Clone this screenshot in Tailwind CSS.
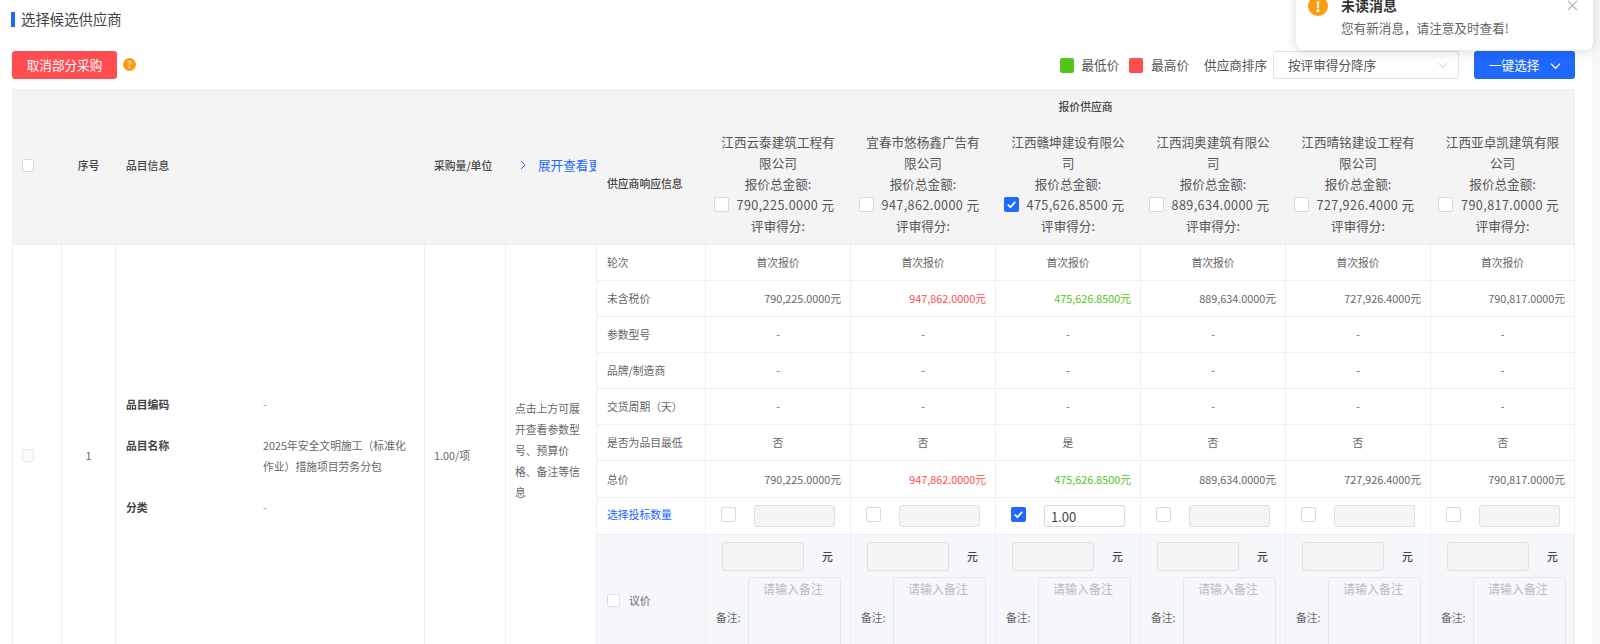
<!DOCTYPE html>
<html lang="zh-CN">
<head>
    <meta charset="UTF-8">
    <title>选择候选供应商</title>
    <script src="https://cdn.jsdelivr.net/npm/@tailwindcss/browser@4"></script>
</head>
<body class="relative h-[644px] w-[1600px] overflow-hidden bg-white font-['Noto_Sans_CJK_SC',sans-serif] text-[10.8px] text-[#666]">
    <!-- Scrollbar track -->
    <div class="absolute bottom-0 right-0 top-0 w-[8px] bg-[#f8f8f8]"></div>

    <!-- Notification -->
    <div class="absolute left-[1296px] top-[-40px] z-10 h-[90px] w-[297px] rounded-lg bg-white shadow-[0_2px_12px_rgba(0,0,0,0.15)]">
        <div class="absolute left-[12px] top-[36px] flex h-[20px] w-[20px] items-center justify-center rounded-full bg-[#fa9d14] text-[14px] font-bold leading-none text-white">!</div>
        <div class="absolute left-[45px] top-[34px] text-[14px] font-bold leading-[22px] text-[#333]">未读消息</div>
        <div class="absolute left-[45px] top-[59px] text-[12.6px] leading-[18px] text-[#666]">您有新消息&#xFF0C;请注意及时查看!</div>
        <svg class="absolute right-[15px] top-[40px] h-[11px] w-[11px] text-[#aaa]" viewBox="0 0 12 12" fill="none" stroke="currentColor" stroke-width="1.2"><path d="M1 1l10 10M11 1L1 11"/></svg>
    </div>

    <!-- Title -->
    <div class="ml-[11px] flex h-[51px] items-start pt-[12px]">
        <span class="h-[15px] w-[4px] bg-[#1f69ff]"></span>
        <span class="ml-[6px] text-[14.4px] leading-[14px] text-[#444]">选择候选供应商</span>
    </div>

    <!-- Toolbar -->
    <div class="ml-[12px] flex h-[28px] w-[1563px] items-center">
        <button class="h-[28px] w-[105px] rounded-[3px] bg-[#ff4d52] text-[12.6px] text-white">取消部分采购</button>
        <span class="mb-[1px] ml-[6px] flex h-[13px] w-[13px] items-center justify-center rounded-full bg-[#fa9d14] text-[9px] leading-none text-white">?</span>
        <div class="ml-auto flex items-center text-[12.6px] text-[#555]">
            <span class="h-[15px] w-[14px] rounded-[2px] bg-[#52c41a]"></span>
            <span class="ml-[7px]">最低价</span>
            <span class="ml-[10px] h-[15px] w-[14px] rounded-[2px] bg-[#ff4d52]"></span>
            <span class="ml-[8px]">最高价</span>
            <span class="ml-[15px]">供应商排序</span>
            <div class="ml-[6px] flex h-[28px] w-[186px] items-center justify-between rounded-[3px] border border-[#e0e0e0] pl-[14px] pr-[10px] text-[#555]">
                按评审得分降序
                <svg class="h-[10px] w-[10px] text-[#bbb]" viewBox="0 0 12 12" fill="none" stroke="currentColor" stroke-width="1"><path d="M1 4l5 5 5-5"/></svg>
            </div>
            <button class="ml-[15px] flex h-[28px] w-[101px] items-center rounded-[3px] bg-[#1f69ff] pl-[15px] text-white">
                一键选择
                <svg class="ml-[11px] h-[11px] w-[11px]" viewBox="0 0 12 12" fill="none" stroke="currentColor" stroke-width="1.4"><path d="M1 4l5 5 5-5"/></svg>
            </button>
        </div>
    </div>

    <!-- Table -->
    <table class="ml-[12px] mt-[10px] w-[1562px] table-fixed border-collapse border-l border-r border-[#eef0f6]">
        <colgroup>
            <col class="w-[49px]"><col class="w-[54px]"><col class="w-[309px]"><col class="w-[81px]"><col class="w-[91px]"><col class="w-[109px]">
            <col class="w-[145px]"><col class="w-[145px]"><col class="w-[145px]"><col class="w-[145px]"><col class="w-[145px]"><col class="w-[144px]">
        </colgroup>
        <thead id="thead" class="bg-[#f4f4f5] text-[10.8px] text-[#444]"></thead>
        <tbody id="tbody"></tbody>
    </table>

    <script>
        const suppliers = [
            { name: '江西云泰建筑工程有限公司', total: '790,225.0000', price: '790,225.0000元', low: '否' },
            { name: '宜春市悠杨鑫广告有限公司', total: '947,862.0000', price: '947,862.0000元', low: '否', tone: 'text-[#ff4d52]' },
            { name: '江西赣坤建设有限公司', total: '475,626.8500', price: '475,626.8500元', low: '是', tone: 'text-[#52c41a]', checked: true },
            { name: '江西润奥建筑有限公司', total: '889,634.0000', price: '889,634.0000元', low: '否' },
            { name: '江西晴铭建设工程有限公司', total: '727,926.4000', price: '727,926.4000元', low: '否' },
            { name: '江西亚卓凯建筑有限公司', total: '790,817.0000', price: '790,817.0000元', low: '否' },
        ];

        const tick = '<svg class="h-full w-full" viewBox="0 0 14 14" fill="none" stroke="white" stroke-width="1.6"><path d="M3.5 7l2.5 2.5 4.5-5"/></svg>';
        const box = (checked) => checked
            ? `<span class="inline-block h-[15px] w-[15px] shrink-0 rounded-[2px] bg-[#1f69ff]">${tick}</span>`
            : '<span class="inline-block h-[15px] w-[15px] shrink-0 rounded-[2px] border border-[#d9d9d9] bg-white"></span>';

        const cell = 'border border-[#eef0f6]';

        document.getElementById('thead').innerHTML = `
            <tr class="h-[36px]">
                <th rowspan="2" class="${cell} pb-[6px] pl-[9px] text-left font-medium"><span class="inline-block h-[13px] w-[12px] rounded-[2px] border border-[#d9d9d9] bg-white align-middle"></span></th>
                <th rowspan="2" class="${cell} pb-[3px] font-medium">序号</th>
                <th rowspan="2" class="${cell} pb-[3px] pl-[10px] text-left font-medium">品目信息</th>
                <th rowspan="2" class="${cell} pb-[3px] pl-[9px] text-left font-medium">采购量/单位</th>
                <th rowspan="2" class="${cell} overflow-hidden whitespace-nowrap pb-[3px] text-left font-normal">
                    <div class="flex items-center pl-[14px] text-[12.6px] text-[#1f69ff]">
                        <svg class="mr-[12px] h-[10px] w-[6px] shrink-0" viewBox="0 0 6 10" fill="none" stroke="currentColor" stroke-width="1"><path d="M1 1l4 4-4 4"/></svg>展开查看更多
                    </div>
                </th>
                <th colspan="7" class="${cell} pb-[3px] font-medium">报价供应商</th>
            </tr>
            <tr class="h-[119px]">
                <th class="${cell} pb-[3px] pl-[10px] text-left font-medium">供应商响应信息</th>
                ${suppliers.map((s) => `
                <th class="${cell} px-[8px] pb-[4px] text-center text-[12.6px] font-normal leading-[21px] text-[#555]">
                    <div class="mx-auto w-[117px]">${s.name}</div>
                    <div>报价总金额:</div>
                    <div class="flex items-center justify-center gap-[8px] whitespace-nowrap pr-[8px]">${box(s.checked)}<span class="tracking-[0.4px]">${s.total} 元</span></div>
                    <div>评审得分:</div>
                </th>`).join('')}
            </tr>`;

        const textRows = [
            ['轮次', () => '首次报价', 'text-center', 36],
            ['未含税价', (s) => s.price, 'price', 36],
            ['参数型号', () => '-', 'text-center', 36],
            ['品牌/制造商', () => '-', 'text-center', 36],
            ['交货周期&#xFF08;天&#xFF09;', () => '-', 'text-center', 36],
            ['是否为品目最低', (s) => s.low, 'text-center', 36],
            ['总价', (s) => s.price, 'price', 37],
        ];

        const valueClass = (kind, s) => kind === 'price' ? `text-right pr-[9px] ${s.tone || ''}` : kind;

        const leading = `
            <td rowspan="9" class="${cell} pb-[4px] pl-[9px]"><span class="inline-block h-[13px] w-[12px] rounded-[2px] border border-[#e4e7ed] bg-[#fafafa] align-middle"></span></td>
            <td rowspan="9" class="${cell} text-center">1</td>
            <td rowspan="9" class="${cell} pl-[10px] pr-[14px]">
                <div class="grid grid-cols-[137px_1fr] gap-y-[20px] leading-[21px]">
                    <b class="font-bold text-[#444]">品目编码</b><span class="text-[#999]">-</span>
                    <b class="font-bold text-[#444]">品目名称</b><span>2025年安全文明施工&#xFF08;标准化作业&#xFF09;措施项目劳务分包</span>
                    <b class="font-bold text-[#444]">分类</b><span class="text-[#999]">-</span>
                </div>
            </td>
            <td rowspan="9" class="${cell} pl-[9px]">1.00/项</td>
            <td rowspan="9" class="${cell} pb-[10px] pl-[9px] pr-[10px] leading-[21px]">点击上方可展开查看参数型号、预算价格、备注等信息</td>`;

        let rows = textRows.map(([label, value, kind, height], i) => `
            <tr style="height:${height}px">
                ${i === 0 ? leading : ''}
                <td class="${cell} pl-[10px] whitespace-nowrap">${label}</td>
                ${suppliers.map((s) => `<td class="${cell} ${valueClass(kind, s)}">${value(s)}</td>`).join('')}
            </tr>`).join('');

        rows += `
            <tr class="h-[37px]">
                <td class="${cell} pb-[3px] pl-[10px] text-[#1f69ff]">选择投标数量</td>
                ${suppliers.map((s) => `
                <td class="${cell}">
                    <div class="flex items-center pl-[15px]">
                        <span class="mb-[3px] flex">${box(s.checked)}</span>
                        ${s.checked
                            ? '<input value="1.00" class="ml-[18px] h-[21.6px] w-[81px] rounded-[3px] border border-[#d9d9d9] bg-white pl-[6px] text-[13px] text-[#444]">'
                            : '<input disabled class="ml-[18px] h-[21.6px] w-[81px] rounded-[3px] border border-[#e0e0e0] bg-[#f5f5f5]">'}
                    </div>
                </td>`).join('')}
            </tr>
            <tr class="h-[132px] bg-[#f5f7fb]">
                <td class="${cell} pl-[10px]">
                    <div class="flex items-center"><span class="inline-block h-[13px] w-[13px] rounded-[2px] border border-[#dcdfe6] bg-white"></span><span class="ml-[9px]">议价</span></div>
                </td>
                ${suppliers.map(() => `
                <td class="${cell} align-top">
                    <div class="flex items-center pl-[16px] pt-[7px]">
                        <span class="h-[29px] w-[82px] rounded-[3px] border border-[#e0e0e0] bg-[#f5f5f5]"></span>
                        <span class="ml-[18px] font-medium text-[#444]">元</span>
                    </div>
                    <div class="mt-[6px] flex items-center pl-[10px]">
                        <span class="w-[32px] shrink-0">备注:</span>
                        <div class="h-[80px] w-[93px] rounded-[3px] border border-[#e8e8e8] bg-[#f5f7fb] pl-[14px] pt-[2px] text-[12px] text-[#bbb]">请输入备注</div>
                    </div>
                </td>`).join('')}
            </tr>`;

        document.getElementById('tbody').innerHTML = rows;
    </script>
</body>
</html>
